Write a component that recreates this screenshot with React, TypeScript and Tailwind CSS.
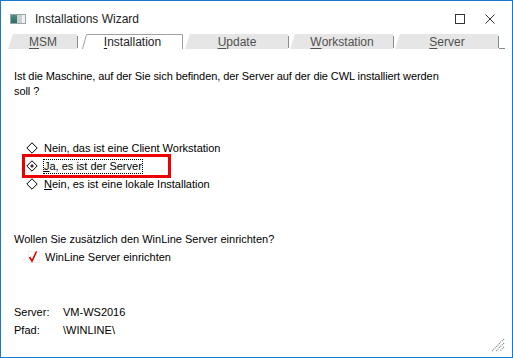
import type React from 'react'

const font = { fontFamily: '"Liberation Sans", Arial, sans-serif' }

function Tab({
  label,
  accel,
  width,
  active = false,
}: {
  label: string
  accel: number
  width: number
  active?: boolean
}) {
  const before = label.slice(0, accel)
  const letter = label.slice(accel, accel + 1)
  const after = label.slice(accel + 1)
  return (
    <div className="relative h-[15px] shrink-0" style={{ width }}>
      {active ? (
        <svg className="absolute inset-0" width={width} height={15}>
          <polygon points={`0,15 4,0 ${width - 1},0 ${width - 1},15`} fill="#fff" />
          <polyline points={`0.5,15 4.5,0.5 ${width - 0.5},0.5 ${width - 0.5},15`} fill="none" stroke="#a0a0a0" />
        </svg>
      ) : (
        <svg className="absolute inset-0" width={width} height={15}>
          <polygon points={`0,15 5,0 ${width - 1},0 ${width - 1},15`} fill="#e6e6e6" />
          <line x1={width - 0.5} y1={2} x2={width - 0.5} y2={14} stroke="#8a8a8a" />
        </svg>
      )}
      <span
        className={`relative flex h-full items-center justify-center text-[12px] ${active ? 'text-[#1e1e1e]' : 'text-[#505050]'}`}
      >
        {before}
        <span className="underline underline-offset-[2px]">{letter}</span>
        {after}
      </span>
    </div>
  )
}

function Diamond({ checked = false }: { checked?: boolean }) {
  return (
    <svg width="12" height="12" viewBox="0 0 12 12" className="shrink-0">
      <polygon points="6,0.8 11.2,6 6,11.2 0.8,6" fill="#fff" stroke="#000" strokeWidth="1" />
      {checked && <polygon points="6,4 8,6 6,8 4,6" fill="#333" />}
    </svg>
  )
}

function Label({ label, accel }: { label: string; accel?: number }) {
  if (accel === undefined) return <>{label}</>
  return (
    <>
      {label.slice(0, accel)}
      <span className="underline underline-offset-[1px]">{label.slice(accel, accel + 1)}</span>
      {label.slice(accel + 1)}
    </>
  )
}

function Option({ label, accel }: { label: string; accel?: number }) {
  return (
    <div className="flex h-[18px] items-center gap-[6px]">
      <Diamond />
      <span>
        <Label label={label} accel={accel} />
      </span>
    </div>
  )
}

export default function App(): React.JSX.Element {
  return (
    <div
      className="flex h-[358px] w-[513px] flex-col border border-[#1a78c8] bg-white text-[11px] text-black"
      style={font}
    >
      {/* title bar */}
      <div className="flex h-[31px] shrink-0 items-center pt-[4px]">
        <div className="ml-[9px] flex h-[10px] w-[16px] items-stretch border border-[#9aa6a8] bg-[#dfe5e6]">
          <div className="w-[6px] bg-gradient-to-b from-[#4f8d8a] to-[#2e6b5e]" />
          <div className="w-[5px] bg-[#c8d0d0]" />
          <div className="w-[3px] bg-[#eef1f1]" />
        </div>
        <span className="ml-[9px] text-[12px] text-[#222]">Installations Wizard</span>
        <div className="ml-auto flex items-center gap-[20px] pr-[17px]">
          <div className="h-[10px] w-[10px] border border-[#333]" />
          <svg width="10" height="10" viewBox="0 0 10 10">
            <path d="M0.5 0.5 L9.5 9.5 M9.5 0.5 L0.5 9.5" stroke="#333" strokeWidth="1" />
          </svg>
        </div>
      </div>

      {/* tabs */}
      <div className="mt-[2px] flex h-[15px] shrink-0 items-end pl-[7px]">
        <Tab label="MSM" accel={0} width={70} />
        <div className="w-[4px]" />
        <Tab label="Installation" accel={0} width={101} active />
        <div className="w-[2px]" />
        <Tab label="Update" accel={0} width={104} />
        <div className="w-[1px]" />
        <Tab label="Workstation" accel={0} width={104} />
        <div className="w-[1px]" />
        <Tab label="Server" accel={0} width={104} />
        <div className="h-[2px] w-[6px] self-end border-b border-[#8a8a8a]" />
      </div>

      {/* content */}
      <div className="flex flex-1 flex-col pl-[13px]">
        <p className="mt-[20px] w-[440px] leading-[15px] tracking-[-0.08px]">
          Ist die Maschine, auf der Sie sich befinden, der Server auf der die CWL installiert werden soll ?
        </p>

        <div className="ml-[12px] mt-[40px] flex flex-col">
          <Option label="Nein, das ist eine Client Workstation" />
          <div className="-my-[3px] -ml-[4px] h-[24px] w-[149px] border-[3px] border-[#ee0000] pl-[1px]">
            <div className="flex h-[18px] items-center gap-[6px]">
              <Diamond checked />
              <span className="outline outline-1 outline-dotted outline-[#000] leading-[13px]">
                <Label label="Ja, es ist der Server" accel={0} />
              </span>
            </div>
          </div>
          <Option label="Nein, es ist eine lokale Installation" accel={0} />
        </div>

        <p className="mt-[38px]">Wollen Sie zusätzlich den WinLine Server einrichten?</p>
        <div className="ml-[14px] mt-[1px] flex items-center gap-[5px]">
          <svg width="12" height="12" viewBox="0 0 12 12">
            <rect x="0.5" y="0.5" width="11" height="11" fill="none" stroke="#f0f0f0" />
            <path d="M1.5 6 L4 10 L8.5 0.5" fill="none" stroke="#e00000" strokeWidth="1.6" />
          </svg>
          <span>WinLine Server einrichten</span>
        </div>

        <div className="mt-[40px] grid grid-cols-[49px_1fr] gap-y-[3px] leading-[15px]">
          <span>Server:</span>
          <span>VM-WS2016</span>
          <span>Pfad:</span>
          <span>\WINLINE\</span>
        </div>

        <div className="mb-[8px] mr-[7px] mt-auto flex justify-end">
          <svg width="14" height="14" viewBox="0 0 14 14">
            <path d="M13 1 L1 13 M13 5 L5 13 M13 9 L9 13" stroke="#808080" strokeWidth="1.2" strokeDasharray="1 1" />
          </svg>
        </div>
      </div>
    </div>
  )
}
